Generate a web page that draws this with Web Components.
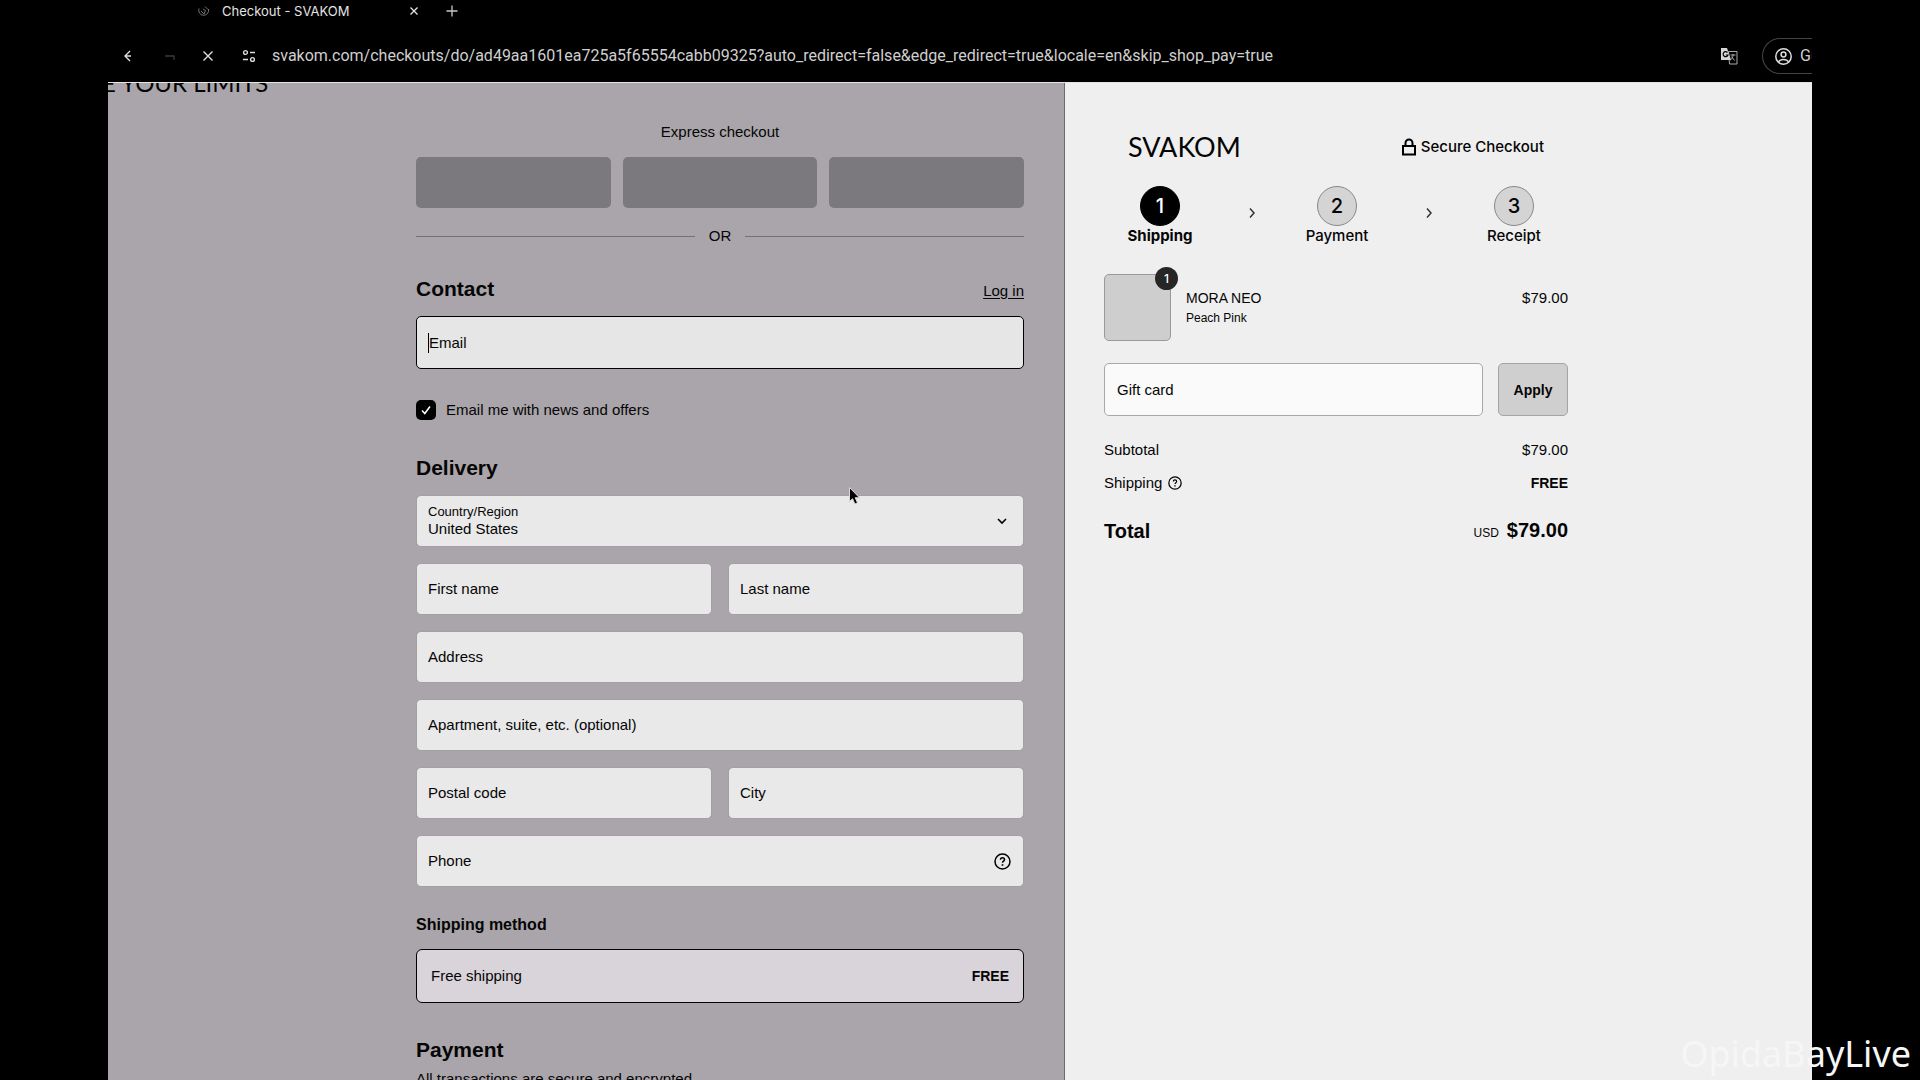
<!DOCTYPE html>
<html lang="en">
<head>
<meta charset="utf-8">
<title>Checkout - SVAKOM</title>
<style>
html, body { margin: 0; height: 100%; background: #000; }
body { font-family: "Liberation Sans", Arial, sans-serif; font-size: 15px; line-height: 20px; color: #050505; overflow: hidden; position: relative; }
checkout-window { height: 100vh; margin: 0 5.625%; }
</style>
</head>
<body>
<checkout-window></checkout-window>
<live-watermark>OpidaBayLive</live-watermark>
<mouse-pointer></mouse-pointer>

<script>
const define = (name, html) => customElements.define(name, class extends HTMLElement {
  constructor() {
    super();
    const t = document.createElement('template');
    t.innerHTML = '<style>*{box-sizing:border-box}</style>' + html;
    this.attachShadow({ mode: 'open' }).append(t.content.cloneNode(true));
  }
});

define('live-watermark', `
<style>:host{position:absolute;right:9px;bottom:4px;font:36px/44px "Noto Sans",sans-serif;color:#f6f6f6}</style>
<slot></slot>`);

define('mouse-pointer', `
<style>:host{position:absolute;left:848px;top:486px}svg{display:block}</style>
<svg width="14" height="20" viewBox="0 0 14 20"><path d="M1.500 1.500v14l3-2.800 2.400 5.300 2.600-1.200-2.300-5.100h4.200z" fill="#000" stroke="#d8d6d9"/></svg>`);

define('help-icon', `
<style>:host{display:block}svg{display:block;width:var(--size,17px);height:var(--size,17px)}</style>
<svg viewBox="0 0 17 17" fill="none" stroke="#000" stroke-width="1.500"><circle cx="8.500" cy="8.500" r="7.500"/><path d="M6.500 6.800c0-1.200.9-2 2-2s2 .8 2 1.900c0 1.300-2 1.500-2 3"/><path d="M8.500 11.200v1.600" stroke-width="1.700"/></svg>`);

define('tab-strip', `
<style>
:host{display:flex;align-items:center;height:22px;padding-left:90px;color:#e4e4e4;font:13px/18px Inter,sans-serif}
.fav{width:12px;height:12px;margin-right:12px}
.title{width:184px;margin-right:2px}
button{all:unset;display:flex;width:12px;height:12px}
.new{margin-left:26px}
svg{width:12px;height:12px}
</style>
<svg class="fav" viewBox="0 0 12 12" fill="none" stroke="#777"><path d="M1 3.500a5 5 0 1 0 9.500.500M3 6l3 3 1.500-3.500L5 4M7 1.500l3 3"/></svg>
<span class="title"><slot></slot></span>
<button aria-label="Close tab"><svg viewBox="0 0 12 12" stroke="#e4e4e4" stroke-width="1.300"><path d="M2.500 2.500l7 7M9.500 2.500l-7 7"/></svg></button>
<button class="new" aria-label="New tab"><svg viewBox="0 0 12 12" stroke="#c8c8c8" stroke-width="1.300"><path d="M6 .5v11M.5 6h11"/></svg></button>`);

define('address-bar', `
<style>
:host{display:flex;align-items:center;height:60px;padding:8px 0 0 15px;color:#cfcfcf;font:16px/20px Roboto,sans-serif;overflow:hidden}
button{all:unset;display:flex;width:14px;margin-right:25px}
svg{flex:none;display:block}
.tune{margin-right:14px}
input{all:unset;flex:1;min-width:0}
.tr{margin-right:24px}
.guest{display:flex;flex:none;align-items:center;gap:8px;box-sizing:border-box;width:50px;height:36px;padding-left:12px;border:1px solid #444;border-right:0;border-radius:18px 0 0 18px;overflow:hidden;margin:0}
</style>
<button aria-label="Back"><svg width="14" height="14" viewBox="0 0 14 14" fill="none" stroke="#ddd" stroke-width="1.400"><path d="M7 2L2 7l5 5M2 7h6"/></svg></button>
<button aria-label="Forward"><svg width="14" height="14" viewBox="0 0 14 14" fill="none" stroke="#3a3a3a" stroke-width="1.300"><path d="M3 7h9v4"/></svg></button>
<button aria-label="Stop"><svg width="14" height="14" viewBox="0 0 14 14" stroke="#ddd" stroke-width="1.400"><path d="M2.500 2.500l9 9M11.500 2.500l-9 9"/></svg></button>
<svg class="tune" width="18" height="14" viewBox="0 0 18 14" fill="none" stroke="#ddd" stroke-width="1.400"><circle cx="5.500" cy="3.500" r="1.900"/><path d="M10 3.500h5M3 10.500h5"/><circle cx="12.500" cy="10.500" r="1.900"/></svg>
<input aria-label="Address" value="svakom.com/checkouts/do/ad49aa1601ea725a5f65554cabb09325?auto_redirect=false&amp;edge_redirect=true&amp;locale=en&amp;skip_shop_pay=true">
<svg class="tr" width="18" height="18" viewBox="0 0 18 18"><path d="M8.500 4.500H17v12.500H9.500z" fill="none" stroke="#aaa"/><path d="M1 1h6l4 12H1z" fill="#d6d6d6"/><path d="M7.500 5.500A2.500 2.500 0 1 0 8 8H5.800" fill="none" stroke="#000" stroke-width="1.200"/><path d="M10.500 8h5M13 7v1c0 2-1 4-2.500 5M11.500 9.500l3 4" fill="none" stroke="#aaa"/></svg>
<button class="guest"><svg width="17" height="17" viewBox="0 0 17 17" fill="none" stroke="#ddd" stroke-width="1.500"><circle cx="8.500" cy="8.500" r="7.700"/><circle cx="8.500" cy="6.500" r="2.400"/><path d="M3.500 14c1-2 3-2.500 5-2.500s4 .5 5 2.500"/></svg>Gu</button>`);

define('text-field', `
<style>
:host{display:block;flex:1;min-width:0}
label{display:flex;align-items:center;height:52px;padding:0 12px 0 11px;border:1px solid #a2a0a3;border-radius:5px;background:#e9e9e9}
:host([active]) label{height:53px;border-color:#000;background:#e6e6e6}
:host([active]) span{border-left:1px solid #000}
:host([light]) label{height:53px;border-color:#a8a8a8;background:#fafafa;padding-left:12px}
input{all:unset;flex:1;min-width:0}
span{flex:none}
</style>
<label><span><slot></slot></span><input><slot name="icon"></slot></label>`);

define('country-select', `
<style>
:host{display:block}
.box{display:flex;align-items:center;height:52px;padding:0 14px 0 11px;border:1px solid #a2a0a3;border-radius:5px;background:#e9e9e9}
.col{display:flex;flex-direction:column;flex:1}
label{font-size:13px;line-height:16px}
select{all:unset;line-height:18px}
</style>
<div class="box"><div class="col"><label for="c">Country/Region</label><select id="c"><option>United States</option></select></div>
<svg width="14" height="14" viewBox="0 0 14 14" fill="none" stroke="#000" stroke-width="1.600"><path d="M3 5l4 4 4-4"/></svg></div>`);

define('checkout-form', `
<style>
:host{display:flex;justify-content:flex-end;padding:0 40px 0 0;background:#a9a5aa;border-right:1px solid #6d696f;overflow:hidden;position:relative}
.slogan{position:absolute;left:-6px;top:-14px;font:24px/28px Lato,sans-serif;white-space:nowrap}
form{display:flex;flex-direction:column;width:100%;max-width:608px;padding-top:39px}
form>*{flex:none}
.exp{text-align:center;margin-bottom:15px}
.pay{display:flex;gap:12px}
.pay button{all:unset;flex:1;height:51px;border-radius:5px;background:#7b797e}
.or{display:flex;align-items:center;gap:14px;margin:18px 0 31px}
.or::before,.or::after{content:"";flex:1;border-top:1px solid #747076}
.head{display:flex;justify-content:space-between;align-items:flex-end;margin-bottom:15px}
h2{margin:0;font-size:21px;line-height:24px}
h3{margin:28px 0 14px;font-size:16px;line-height:20px}
a{color:inherit;text-underline-offset:2px}
.news{display:flex;align-items:center;gap:10px;margin:31px 0 36px}
.news input{appearance:none;margin:0;width:20px;height:20px;border-radius:5px;background:#000}
.tick{display:grid}
.tick>*{grid-area:1/1}
.fields{display:flex;flex-direction:column;gap:16px;margin-top:15px}
.row{display:flex;gap:16px}
.ship{display:flex;justify-content:space-between;align-items:center;height:54px;padding:0 14px;border:1px solid #000;border-radius:6px;background:#d9d3da}
.ship b{font-size:14px}
.p{margin-top:35px}
p{margin:7px 0 0}
</style>
<div class="slogan">E YOUR LIMITS</div>
<form>
<div class="exp">Express checkout</div>
<div class="pay"><button type="button" aria-label="Express option one"></button><button type="button" aria-label="Express option two"></button><button type="button" aria-label="Express option three"></button></div>
<div class="or">OR</div>
<div class="head"><h2>Contact</h2><a href="#login">Log in</a></div>
<text-field active>Email</text-field>
<label class="news"><span class="tick"><input type="checkbox" checked><svg width="20" height="20" viewBox="0 0 20 20" fill="none" stroke="#fff" stroke-width="1.500"><path d="M6 10.500l2.800 3L14 6.500"/></svg></span>Email me with news and offers</label>
<h2>Delivery</h2>
<div class="fields">
<country-select></country-select>
<div class="row"><text-field>First name</text-field><text-field>Last name</text-field></div>
<text-field>Address</text-field>
<text-field>Apartment, suite, etc. (optional)</text-field>
<div class="row"><text-field>Postal code</text-field><text-field>City</text-field></div>
<text-field>Phone<help-icon slot="icon"></help-icon></text-field>
</div>
<h3>Shipping method</h3>
<div class="ship"><span>Free shipping</span><b>FREE</b></div>
<h2 class="p">Payment</h2>
<p>All transactions are secure and encrypted.</p>
</form>`);

define('progress-step', `
<style>
:host{display:flex;flex-direction:column;align-items:center;width:64px;font:500 15px/20px Inter,sans-serif}
i{display:flex;align-items:center;justify-content:center;width:40px;height:40px;border:1px solid #888;border-radius:50%;background:#d4d4d4;font:500 20px/20px Inter,sans-serif}
:host([current]){font-weight:700}
:host([current]) i{background:#000;border-color:#000;color:#fff}
</style>
<i><slot name="n"></slot></i><slot></slot>`);

define('step-arrow', `
<style>:host{display:flex;flex:1;align-items:center;justify-content:center;padding:0 0 6px 6px}</style>
<svg width="8" height="12" viewBox="0 0 8 12" fill="none" stroke="#333" stroke-width="1.500"><path d="M2 1.500L6 6l-4 4.500"/></svg>`);

define('sum-line', `
<style>
:host{display:flex;justify-content:space-between;align-items:center;height:33px}
.l{display:flex;align-items:center;gap:6px}
.r{display:flex;align-items:baseline;gap:8px}
:host([total]){font-size:20px;font-weight:700;height:24px}
::slotted(small){font-size:12px;font-weight:400}
</style>
<span class="l"><slot></slot></span><span class="r"><slot name="value"></slot></span>`);

define('order-summary', `
<style>
:host{display:block;padding:0 40px 0 39px;background:#efefef;overflow:hidden}
.in{display:flex;flex-direction:column;max-width:464px;padding-top:49px}
.top,.steps{display:flex;justify-content:space-between;align-items:center;padding:0 24px}
.logo{font:27px/30px Lato,sans-serif}
.sec{display:flex;align-items:center;gap:4px;font:500 15px/20px Inter,sans-serif}
.steps{margin:24px 0 28px;padding-right:22px}
.item{display:flex;align-items:center;gap:15px}
.thumb{position:relative;width:67px;height:67px;border:1px solid #999;border-radius:5px;background:#cecece}
.badge{position:absolute;right:-8px;top:-8px;width:23px;height:23px;border-radius:50%;background:#262626;color:#fff;font:500 12px/23px Inter,sans-serif;text-align:center}
.name{display:flex;flex-direction:column;flex:1;font-size:14px;line-height:20px}
.name small{font-size:12px}
.price{padding-bottom:20px}
.gift{display:flex;gap:15px;margin:22px 0 17px}
.gift button{all:unset;width:70px;height:53px;box-sizing:border-box;border:1px solid #a4a4a4;border-radius:5px;background:#cfcfcf;text-align:center;font-weight:700;font-size:14px}
sum-line[total]{margin-top:20px}
b{font-size:14px}
sum-line[total] b{font-size:20px}
</style>
<div class="in">
<div class="top"><span class="logo">SVAKOM</span><span class="sec"><svg width="16" height="18" viewBox="0 0 16 18" fill="none" stroke="#000" stroke-width="2"><path d="M2 8h12v8.500H2z"/><path d="M4.500 8V5a3.500 3.500 0 0 1 7 0v3"/></svg>Secure Checkout</span></div>
<div class="steps">
<progress-step current><span slot="n">1</span>Shipping</progress-step><step-arrow></step-arrow>
<progress-step><span slot="n">2</span>Payment</progress-step><step-arrow></step-arrow>
<progress-step><span slot="n">3</span>Receipt</progress-step>
</div>
<div class="item"><div class="thumb"><span class="badge">1</span></div><div class="name"><span>MORA NEO</span><small>Peach Pink</small></div><span class="price">$79.00</span></div>
<div class="gift"><text-field light>Gift card</text-field><button>Apply</button></div>
<sum-line>Subtotal<span slot="value">$79.00</span></sum-line>
<sum-line>Shipping<help-icon style="--size:14px"></help-icon><b slot="value">FREE</b></sum-line>
<sum-line total>Total<small slot="value">USD</small><b slot="value">$79.00</b></sum-line>
</div>`);

define('checkout-window', `
<style>
:host{display:flex;flex-direction:column;overflow:hidden}
main{flex:1;min-height:0;display:grid;grid-template-columns:957fr 747fr;border-top:1px solid #e4e4e4}
</style>
<tab-strip>Checkout - SVAKOM</tab-strip>
<address-bar></address-bar>
<main><checkout-form></checkout-form><order-summary></order-summary></main>`);
</script>
</body>
</html>
